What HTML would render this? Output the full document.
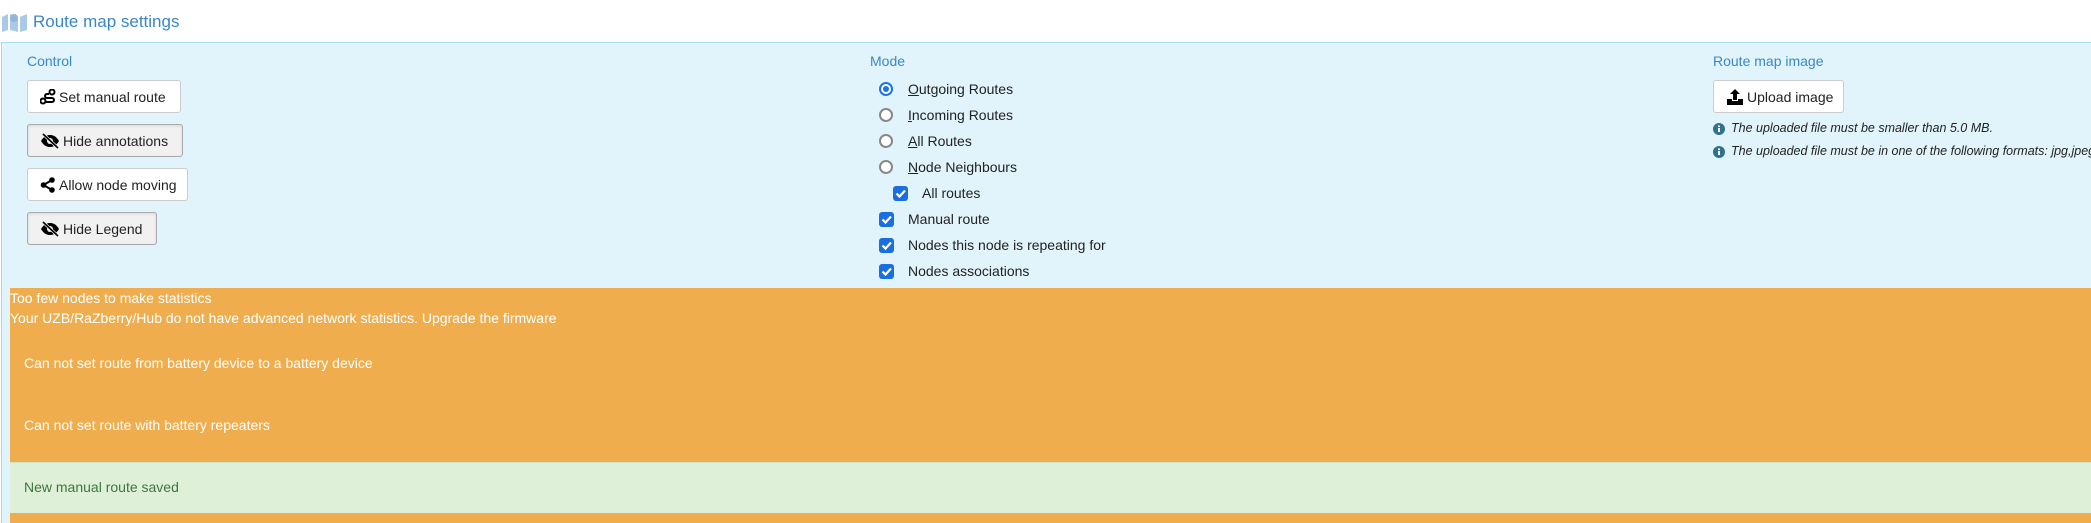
<!DOCTYPE html>
<html><head><style>
*{box-sizing:border-box;margin:0;padding:0}
html,body{width:2091px;height:523px;overflow:hidden}
body{background:#fff;font-family:"Liberation Sans",Arial,sans-serif;font-size:14px;color:#222;position:relative}
.abs{position:absolute;white-space:nowrap}
.title{left:33px;top:12px;font-size:17px;color:#3a87c8}
.panel{left:1px;top:42px;width:2100px;height:490px;background:#e1f4fb;border:1px solid #a9d9ef}
.lbl{color:#3a87c8;font-size:14px}
.btn{position:absolute;height:33px;border:1px solid #ccc;border-radius:3px;background:#fff;font-size:14px;display:flex;align-items:center;padding-left:12px;gap:3px}
.btn.act{background:#f1f1f1;border-color:#aaa;box-shadow:inset 0 1px 3px rgba(0,0,0,.1)}
.rad{position:absolute;width:14px;height:14px;border:2px solid #888;border-radius:50%;background:#fff}
.rad.on{border-color:#1a73e8}
.rad.on::after{content:"";position:absolute;left:2px;top:2px;width:6px;height:6px;border-radius:50%;background:#1a73e8}
.cb{position:absolute;width:15px;height:15px;border-radius:3px;background:#1a6fe0}
.orange{left:10px;top:288px;width:2100px;height:260px;background:#efad4e;color:#fff}
.green{left:10px;top:462px;width:2100px;height:51px;background:#dff0d8;color:#3c763d;border-top:1px solid #d0e6c5}
.info{font-style:italic;font-size:12.5px}
.ot{color:#fff;font-size:14px}
</style></head><body>
<svg class="abs" style="left:2px;top:12px" width="25" height="20" viewBox="0 0 25 20"><path d="M0 5l6-3v16l-6 2z M8 2l8 3v15l-8-2z M18 5l7-3v16l-7 2z" fill="#a9c9e6"/><circle cx="12" cy="6" r="4" fill="#8fb7de"/></svg>
<div class="abs title">Route map settings</div>
<div class="abs panel"></div>
<div class="abs lbl" style="left:27px;top:53px">Control</div>
<div class="btn" style="left:27px;top:80px;width:154px"><svg width="16" height="16" viewBox="0 0 16 16"><circle cx="3" cy="12" r="2.5" fill="none" stroke="#000" stroke-width="2"/><circle cx="12" cy="3" r="2.5" fill="none" stroke="#000" stroke-width="2"/><path d="M6 13h6a2 2 0 0 0 0-4H7a2 2 0 0 1 0-4h2" fill="none" stroke="#000" stroke-width="2"/></svg>Set manual route</div>
<div class="btn act" style="left:27px;top:124px;width:156px"><svg width="20" height="16" viewBox="0 0 20 16"><path d="M1 8c3-5 6-6 9-6s6 1 9 6c-3 5-6 6-9 6s-6-1-9-6z" fill="#000"/><circle cx="10" cy="8" r="3" fill="#f1f1f1"/><path d="M3 1l15 14" stroke="#f1f1f1" stroke-width="3"/><path d="M3 1l15 14" stroke="#000" stroke-width="1.6"/></svg> Hide annotations</div>
<div class="btn" style="left:27px;top:168px;width:161px"><svg width="16" height="16" viewBox="0 0 16 16"><circle cx="12" cy="3" r="2.8"/><circle cx="3.5" cy="8" r="2.8"/><circle cx="12" cy="13" r="2.8"/><path d="M12 3L3.5 8 12 13" stroke="#000" stroke-width="2" fill="none"/></svg>Allow node moving</div>
<div class="btn act" style="left:27px;top:212px;width:130px"><svg width="20" height="16" viewBox="0 0 20 16"><path d="M1 8c3-5 6-6 9-6s6 1 9 6c-3 5-6 6-9 6s-6-1-9-6z" fill="#000"/><circle cx="10" cy="8" r="3" fill="#f1f1f1"/><path d="M3 1l15 14" stroke="#f1f1f1" stroke-width="3"/><path d="M3 1l15 14" stroke="#000" stroke-width="1.6"/></svg> Hide Legend</div>

<div class="abs lbl" style="left:870px;top:53px">Mode</div>
<div class="rad on" style="left:879px;top:82px"></div><div class="abs" style="left:908px;top:81px"><u>O</u>utgoing Routes</div>
<div class="rad" style="left:879px;top:108px"></div><div class="abs" style="left:908px;top:107px"><u>I</u>ncoming Routes</div>
<div class="rad" style="left:879px;top:134px"></div><div class="abs" style="left:908px;top:133px"><u>A</u>ll Routes</div>
<div class="rad" style="left:879px;top:160px"></div><div class="abs" style="left:908px;top:159px"><u>N</u>ode Neighbours</div>
<div class="cb" style="left:893px;top:186px"></div><div class="abs" style="left:922px;top:185px">All routes</div>
<div class="cb" style="left:879px;top:212px"></div><div class="abs" style="left:908px;top:211px">Manual route</div>
<div class="cb" style="left:879px;top:238px"></div><div class="abs" style="left:908px;top:237px">Nodes this node is repeating for</div>
<div class="cb" style="left:879px;top:264px"></div><div class="abs" style="left:908px;top:263px">Nodes associations</div>
<svg class="abs" style="left:0;top:0" width="2091" height="300"><g fill="none" stroke="#fff" stroke-width="2.2"><path d="M896.5 193.5l3 3 5.5-6"/><path d="M882.5 219.5l3 3 5.5-6"/><path d="M882.5 245.5l3 3 5.5-6"/><path d="M882.5 271.5l3 3 5.5-6"/></g></svg>

<div class="abs lbl" style="left:1713px;top:53px">Route map image</div>
<div class="btn" style="left:1713px;top:80px;width:131px"><svg width="18" height="16" viewBox="0 0 18 16"><path d="M9 0l5 5h-3v6H7V5H4z M1 10h5v2h6v-2h5v6H1z"/></svg>Upload image</div>
<svg class="abs" style="left:1713px;top:123px" width="12" height="12"><circle cx="6" cy="6" r="6" fill="#31708f"/><rect x="5" y="5" width="2" height="4" fill="#fff"/><rect x="5" y="2.5" width="2" height="1.6" fill="#fff"/></svg>
<div class="abs info" style="left:1731px;top:121px">The uploaded file must be smaller than 5.0 MB.</div>
<svg class="abs" style="left:1713px;top:146px" width="12" height="12"><circle cx="6" cy="6" r="6" fill="#31708f"/><rect x="5" y="5" width="2" height="4" fill="#fff"/><rect x="5" y="2.5" width="2" height="1.6" fill="#fff"/></svg>
<div class="abs info" style="left:1731px;top:144px">The uploaded file must be in one of the following formats: jpg,jpeg,png,gif</div>

<div class="abs orange"></div>
<div class="abs ot" style="left:10px;top:290px">Too few nodes to make statistics</div>
<div class="abs ot" style="left:10px;top:310px">Your UZB/RaZberry/Hub do not have advanced network statistics. Upgrade the firmware</div>
<div class="abs ot" style="left:24px;top:355px">Can not set route from battery device to a battery device</div>
<div class="abs ot" style="left:24px;top:417px">Can not set route with battery repeaters</div>
<div class="abs green"></div>
<div class="abs" style="left:24px;top:479px;color:#3c763d;font-size:14px">New manual route saved</div>
</body></html>
